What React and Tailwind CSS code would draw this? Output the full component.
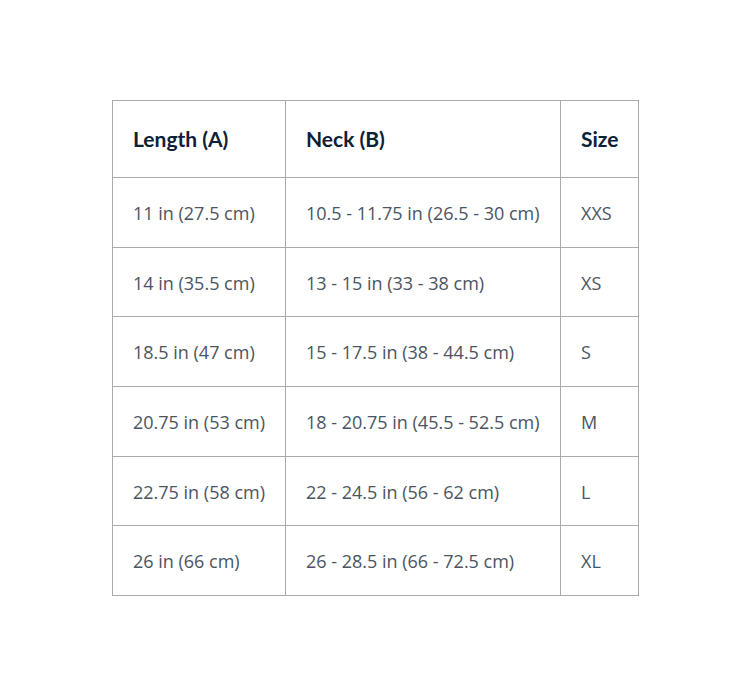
import React from "react";

const rows = [
  ["11 in (27.5 cm)", "10.5 - 11.75 in (26.5 - 30 cm)", "XXS"],
  ["14 in (35.5 cm)", "13 - 15 in (33 - 38 cm)", "XS"],
  ["18.5 in (47 cm)", "15 - 17.5 in (38 - 44.5 cm)", "S"],
  ["20.75 in (53 cm)", "18 - 20.75 in (45.5 - 52.5 cm)", "M"],
  ["22.75 in (58 cm)", "22 - 24.5 in (56 - 62 cm)", "L"],
  ["26 in (66 cm)", "26 - 28.5 in (66 - 72.5 cm)", "XL"],
];

export default function App() {
  return (
    <div className="min-h-[680px] bg-white pl-[112px] pt-[100px]">
      {/* Size chart */}
      <table className="w-[526px] table-fixed border-collapse">
        <colgroup>
          <col className="w-[173px]" />
          <col className="w-[275px]" />
          <col className="w-[78px]" />
        </colgroup>
        <thead>
          <tr className="h-[77px]">
            {["Length (A)", "Neck (B)", "Size"].map((h) => (
              <th
                key={h}
                className="border border-[#aaaaaa] pl-[20px] pr-1 text-left align-middle text-[21px] font-bold text-[#0b2135] font-['Lato',sans-serif]"
              >
                {h}
              </th>
            ))}
          </tr>
        </thead>
        <tbody>
          {rows.map((r) => (
            <tr key={r[2]} className="h-[69.7px]">
              {r.map((c, i) => (
                <td
                  key={i}
                  className="border border-[#aaaaaa] pl-[20px] pr-1 pt-[2px] align-middle whitespace-nowrap text-[18px] text-[#4b5461] font-['Open_Sans',sans-serif]"
                >
                  {c}
                </td>
              ))}
            </tr>
          ))}
        </tbody>
      </table>
    </div>
  );
}
